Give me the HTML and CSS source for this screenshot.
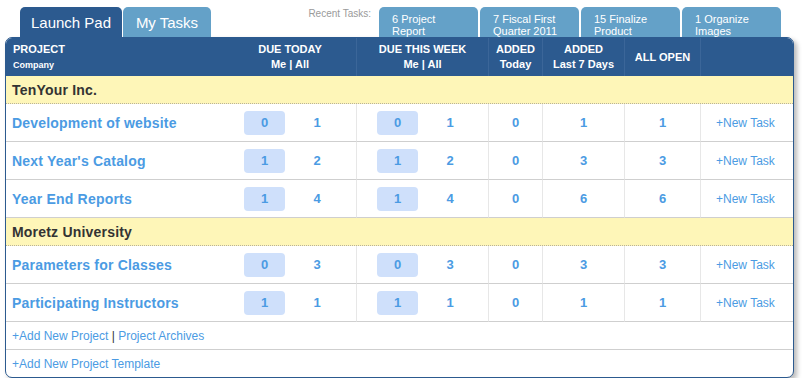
FILE: index.html
```html
<!DOCTYPE html>
<html lang="en">
<head>
    <meta charset="UTF-8">
    <title>Launch Pad</title>
    <link rel="stylesheet" href="styles.css">
</head>
<body>
    <div class="tabbar">
        <div class="tabs">
            <a class="tab active">Launch Pad</a>
            <a class="tab">My Tasks</a>
        </div>
        <div class="recent">
            <span class="recent-label">Recent Tasks:</span>
            <a class="recent-tab">6 Project<br>Report</a>
            <a class="recent-tab">7 Fiscal First<br>Quarter 2011</a>
            <a class="recent-tab">15 Finalize<br>Product</a>
            <a class="recent-tab">1 Organize<br>Images</a>
        </div>
    </div>

    <div class="panel">
        <table class="projects">
            <colgroup>
                <col style="width: 218px">
                <col style="width: 132px">
                <col style="width: 132px">
                <col style="width: 54px">
                <col style="width: 82px">
                <col style="width: 76px">
                <col style="width: 93px">
            </colgroup>
            <thead>
                <tr>
                    <th class="name-col">PROJECT<br><span class="sub">Company</span></th>
                    <th>DUE TODAY<br>Me | All</th>
                    <th class="sep">DUE THIS WEEK<br>Me | All</th>
                    <th class="sep">ADDED<br>Today</th>
                    <th class="sep">ADDED<br>Last 7 Days</th>
                    <th class="sep">ALL OPEN</th>
                    <th class="sep"></th>
                </tr>
            </thead>
            <tbody>
                <tr class="company"><td colspan="7">TenYour Inc.</td></tr>
                <tr>
                    <td class="name"><a>Development of website</a></td>
                    <td><span class="me">0</span><span class="all">1</span></td>
                    <td class="sep"><span class="me">0</span><span class="all">1</span></td>
                    <td class="sep num">0</td>
                    <td class="sep num">1</td>
                    <td class="sep num">1</td>
                    <td class="sep new"><a>+New Task</a></td>
                </tr>
                <tr>
                    <td class="name"><a>Next Year's Catalog</a></td>
                    <td><span class="me">1</span><span class="all">2</span></td>
                    <td class="sep"><span class="me">1</span><span class="all">2</span></td>
                    <td class="sep num">0</td>
                    <td class="sep num">3</td>
                    <td class="sep num">3</td>
                    <td class="sep new"><a>+New Task</a></td>
                </tr>
                <tr>
                    <td class="name"><a>Year End Reports</a></td>
                    <td><span class="me">1</span><span class="all">4</span></td>
                    <td class="sep"><span class="me">1</span><span class="all">4</span></td>
                    <td class="sep num">0</td>
                    <td class="sep num">6</td>
                    <td class="sep num">6</td>
                    <td class="sep new"><a>+New Task</a></td>
                </tr>
                <tr class="company"><td colspan="7">Moretz University</td></tr>
                <tr>
                    <td class="name"><a>Parameters for Classes</a></td>
                    <td><span class="me">0</span><span class="all">3</span></td>
                    <td class="sep"><span class="me">0</span><span class="all">3</span></td>
                    <td class="sep num">0</td>
                    <td class="sep num">3</td>
                    <td class="sep num">3</td>
                    <td class="sep new"><a>+New Task</a></td>
                </tr>
                <tr>
                    <td class="name"><a>Participating Instructors</a></td>
                    <td><span class="me">1</span><span class="all">1</span></td>
                    <td class="sep"><span class="me">1</span><span class="all">1</span></td>
                    <td class="sep num">0</td>
                    <td class="sep num">1</td>
                    <td class="sep num">1</td>
                    <td class="sep new"><a>+New Task</a></td>
                </tr>
                <tr class="footer">
                    <td colspan="7"><a>+Add New Project</a> | <a>Project Archives</a></td>
                </tr>
                <tr class="footer last">
                    <td colspan="7"><a>+Add New Project Template</a></td>
                </tr>
            </tbody>
        </table>
    </div>
</body>
</html>
```

FILE: styles.css
```css
body {
    margin: 0;
    padding: 0;
    background-color: #fff;
    font-family: "Liberation Sans", Arial, sans-serif;
}

a {
    color: #4b9be3;
    cursor: pointer;
}

.tabbar {
    display: flex;
    justify-content: space-between;
    padding: 7px 0 0 20px;
    width: 761px;
    height: 30px;
}

.tabs {
    display: flex;
    gap: 1px;
}

.tab {
    display: block;
    height: 30px;
    line-height: 31px;
    border-radius: 5px 5px 0 0;
    background-color: #64a1c8;
    color: #fff;
    font-size: 15px;
    text-align: center;
    white-space: nowrap;
}

.tab.active {
    width: 102px;
    background-color: #2c5a8f;
}

.tab + .tab {
    width: 88px;
}

.recent {
    display: flex;
    gap: 2px;
}

.recent-label {
    margin: 1px 6px 0 0;
    color: #9a9a9a;
    font-size: 10px;
}

.recent-tab {
    display: block;
    width: 99px;
    height: 30px;
    padding: 6px 0 0 13px;
    box-sizing: border-box;
    border-radius: 5px 5px 0 0;
    background-color: #64a1c8;
    color: #fff;
    font-size: 11px;
    line-height: 12px;
    overflow: hidden;
}

.panel {
    margin-left: 5px;
    width: 787px;
    border: 1px solid #2c5a8f;
    border-radius: 7px;
    overflow: hidden;
    box-shadow: 3px 3px 5px rgba(0, 0, 0, 0.28);
    background-color: #fff;
}

.projects {
    width: 787px;
    border-collapse: separate;
    border-spacing: 0;
    table-layout: fixed;
}

.projects th {
    height: 38px;
    padding: 0;
    background-color: #2c5a8f;
    color: #fff;
    font-size: 11px;
    line-height: 15px;
    font-weight: bold;
    text-align: center;
    vertical-align: middle;
}

.projects th.sep {
    border-left: 1px solid #3b6699;
}

.projects th.name-col {
    padding-left: 7px;
    text-align: left;
}

.projects th .sub {
    font-size: 9px;
}

.projects td {
    height: 37px;
    padding: 0;
    border-bottom: 1px solid #cfcfcf;
    vertical-align: middle;
    font-size: 13px;
    font-weight: bold;
    color: #4b9be3;
}

.projects td.sep {
    border-left: 1px solid #e7e7e7;
}

.projects td.name {
    padding-left: 6px;
    font-size: 14px;
    letter-spacing: 0.2px;
}

.projects td.num {
    text-align: center;
}

.projects td.new {
    padding-left: 15px;
    font-size: 12px;
    font-weight: normal;
}

.me {
    display: inline-block;
    width: 41px;
    height: 24px;
    line-height: 24px;
    margin-left: 20px;
    border-radius: 4px;
    background-color: #cfe0fb;
    text-align: center;
    vertical-align: middle;
}

.all {
    display: inline-block;
    width: 24px;
    margin-left: 20px;
    text-align: center;
    vertical-align: middle;
}

.projects .company td {
    height: 27px;
    padding-left: 6px;
    background-color: #fef6b8;
    border-bottom: 1px dotted #b9b29a;
    color: #333;
    font-size: 14px;
    letter-spacing: 0.2px;
}

.projects .footer td {
    height: 27px;
    padding-left: 6px;
    font-size: 12px;
    font-weight: normal;
    color: #333;
}

.projects .footer.last td {
    border-bottom: none;
}
```
